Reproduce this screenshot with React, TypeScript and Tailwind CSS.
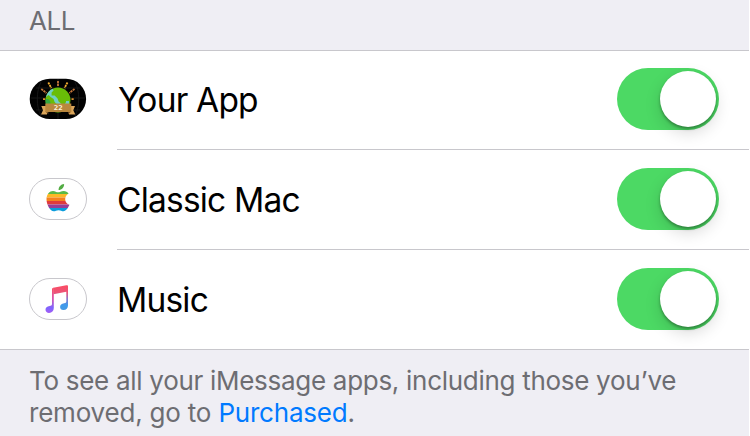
import type { ReactNode } from "react";

function GlobeIcon() {
  return (
    <svg viewBox="0 0 58 42" className="h-[42px] w-[58px]">
      <rect x="0.7" y="0.8" width="56.4" height="40.2" rx="20.1" fill="#020202" />
      <path d="M2 20h54M29 1v40M12 4c-5 9-5 25 0 34M46 4c5 9 5 25 0 34M7 10h44M7 32h44" stroke="#171717" fill="none" />
      <g strokeWidth="1.8" fill="none" strokeDasharray="2.2 0.6">
        <path d="M29 3v5.500M12.300 11l5.200 4M45.500 11l-5.200 4" stroke="#c5753a" />
        <path d="M19.300 4.500l3 5.500M38.500 4.500l-3 5.500" stroke="#f3ae32" />
        <path d="M14 21.200h2.200M42.500 21.200h2.200" stroke="#d9902f" />
      </g>
      <circle cx="29" cy="22" r="12.500" fill="#69bd08" />
      <path d="M17 19c1-3.800 3.300-6.800 6.800-8.200l.8 1.700-2 2v3h3l3 3 1 3 3 2.500v1h-4l-3-3-1-3-3-2-2-2z" fill="#70cfc5" />
      <path d="M16.500 21h3l2 3v3h-4.500c-.5-2-.7-4-.5-6z" fill="#35a943" />
      <path d="M37 23h3v3h-4l1-2z" fill="#70cfc5" />
      <path d="M12.300 28H18v8.500h-6l2-4.200zM46 28H40v8.500h6.300l-2-4.200z" fill="#dba65b" />
      <path d="M16.300 33.500l3 2.800v-2.800zM42.300 33.500l-3 2.800v-2.800z" fill="#795020" />
      <path d="M16.300 25.500H42.300V34H16.300z" fill="#b9873d" />
      <text x="29.200" y="32.300" textAnchor="middle" textLength="9" lengthAdjust="spacingAndGlyphs" fontSize="6.500" fontWeight="800" fontFamily="DejaVu Sans Mono, monospace" fill="#fff4df">22</text>
    </svg>
  );
}

function Pill({ children }: { children: ReactNode }) {
  return (
    <svg viewBox="0 0 58 42" className="h-[42px] w-[58px]">
      <rect x="0.500" y="0.500" width="57" height="41" rx="20.500" fill="#fff" stroke="#c8c7cc" />
      {children}
    </svg>
  );
}

function AppleIcon() {
  return (
    <Pill>
      <defs>
        <clipPath id="fruit">
          <path d="M29.500 14.300c1.500 0 3.100-1.400 5.700-1.400 2 0 3.800.9 4.900 2.600-5 2.900-4.300 9.400.8 11.300-1 2.500-3.300 6.500-5.900 6.500-2 0-2.600-1.100-4.900-1.100s-3 1.100-4.900 1.100c-3.300 0-7.200-6.300-7.200-12 0-5.200 3.100-8.400 6.500-8.400 2.200 0 3.600 1.400 5 1.400z" transform="translate(-0.5 0)" />
        </clipPath>
      </defs>
      <path d="M29.600 12c-.2-3.200 2.300-5.900 5.500-6.100.3 3.300-2.400 6-5.500 6.100z" fill="#52ac43" />
      <g clipPath="url(#fruit)">
        <path d="M17 12h25v4H17z" fill="#5bb947" />
        <path d="M17 16h25v3.500H17z" fill="#fcb827" />
        <path d="M17 19.500h25V23H17z" fill="#f48220" />
        <path d="M17 23h25v3.500H17z" fill="#e03a3c" />
        <path d="M17 26.500h25V30H17z" fill="#963d97" />
        <path d="M17 30h25v4H17z" fill="#099cdc" />
      </g>
    </Pill>
  );
}

function MusicIcon() {
  return (
    <Pill>
      <defs>
        <linearGradient id="left" x1="0" y1="0" x2="0" y2="1">
          <stop offset="0" stopColor="#ff4c5e" />
          <stop offset="0.450" stopColor="#d654b2" />
          <stop offset="0.800" stopColor="#7d65ff" />
          <stop offset="1" stopColor="#a45cf4" />
        </linearGradient>
        <linearGradient id="right" x1="0" y1="0" x2="0" y2="1">
          <stop offset="0" stopColor="#fb4c62" />
          <stop offset="0.300" stopColor="#ec5378" />
          <stop offset="0.550" stopColor="#8c76cf" />
          <stop offset="0.800" stopColor="#3e9bec" />
          <stop offset="1" stopColor="#4698e2" />
        </linearGradient>
      </defs>
      <path d="M23 11.500c0-1 .4-1.500 1.800-1.700V30c0 3-2 4.800-4.600 4.900-2 .1-3.700-1.200-3.700-3.100 0-2.300 1.500-3.400 4-3.800 1.600-.2 2.500-.6 2.500-2z" fill="url(#left)" />
      <path d="M24.300 9.800l13-2.600c1.200-.2 1.700.1 1.700 1.100v19c0 3-1.800 4.700-4.500 4.800-2 .1-3.400-1.200-3.400-3.100 0-2.300 1.500-3.400 4-3.800 1.600-.2 2.200-.6 2.200-2v-9.500L24.500 16.300z" fill="url(#right)" />
    </Pill>
  );
}

function Toggle() {
  return (
    <button role="switch" aria-checked="true" className="flex h-[62px] w-[102px] shrink-0 items-center justify-end rounded-full bg-[#4cd964] pr-[3px]">
      <span className="size-14 rounded-full bg-white shadow-[0_6px_16px_rgba(0,0,0,0.15),0_2px_3px_rgba(0,0,0,0.32)]" />
    </button>
  );
}

function Row({ icon, name, className, labelClass }: { icon: ReactNode; name: string; className: string; labelClass: string }) {
  return (
    <div className={`flex pl-[29px] ${className}`}>
      <div className="flex w-[88px] shrink-0 items-center">{icon}</div>
      <div className="flex grow items-center justify-between pr-[30px]">
        <span className={`pt-[2px] text-[33.5px] leading-[42px] tracking-[-0.8px] text-black ${labelClass}`}>{name}</span>
        <Toggle />
      </div>
    </div>
  );
}

export default function App() {
  return (
    <div className="h-[436px] bg-white font-['Inter',sans-serif]">
      <main className="flex h-full w-[749px] flex-col overflow-hidden bg-[#efeef4]">
        <h2 className="h-[50px] pt-[5px] pl-[29px] text-[26px] leading-8 font-normal tracking-[-0.5px] text-[#6d6d72]">ALL</h2>
        <section className="h-[300px] border-y border-[#c8c7cc] bg-white">
          <Row icon={<GlobeIcon />} name="Your App" className="h-[98px] pb-[2px]" labelClass="pl-[1px]" />
          <hr className="ml-[117px] border-[#c8c7cc]" />
          <Row icon={<AppleIcon />} name="Classic Mac" className="h-[99px] pb-[1px]" labelClass="" />
          <hr className="ml-[117px] border-[#c8c7cc]" />
          <Row icon={<MusicIcon />} name="Music" className="h-[99px] pb-[1px]" labelClass="" />
        </section>
        <p className="pt-[15px] pl-[29px] text-[26px] leading-8 whitespace-nowrap text-[#6d6d72]">
          <span className="block tracking-[-0.29px]">To see all your iMessage apps, including those you’ve</span>
          <span className="block tracking-[-0.2px]">
            removed, go to <a className="text-[#007aff]">Purchased</a>.
          </span>
        </p>
      </main>
    </div>
  );
}
